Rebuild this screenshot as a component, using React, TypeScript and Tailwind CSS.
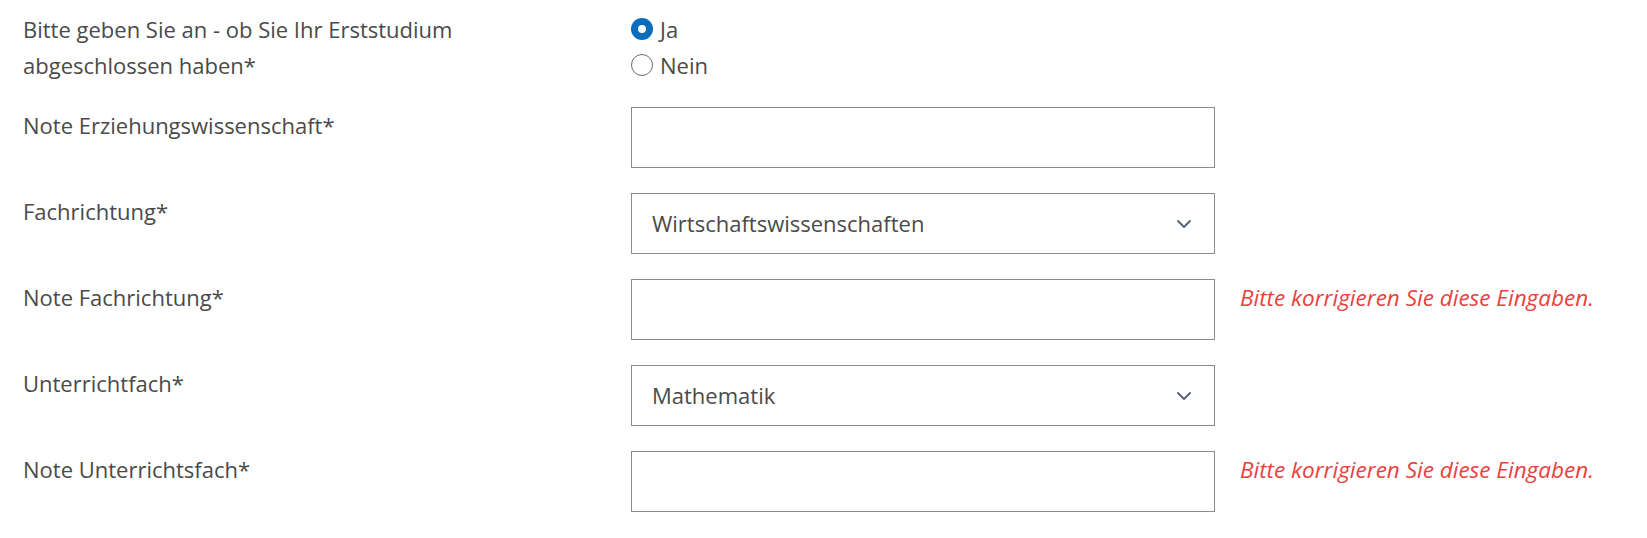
import { ChevronDown } from 'lucide-react'

const font = { fontFamily: '"Open Sans", "Noto Sans", sans-serif' }

function Row({ label, error, lh = 'leading-[37px]', children }: { label: React.ReactNode; error?: boolean; lh?: string; children: React.ReactNode }) {
  return (
    <div className="flex items-start">
      <div className={`w-[608px] shrink-0 text-[22px] ${lh} text-[#4a4a4a]`}>{label}</div>
      <div className="w-[584px] shrink-0">{children}</div>
      {error && (
        <p className="ml-[25px] text-[22.5px] leading-[37px] italic text-[#e8413e]">Bitte korrigieren Sie diese Eingaben.</p>
      )}
    </div>
  )
}

function TextBox() {
  return <input className="block w-full h-[61px] border border-[#8c8c8c] bg-white px-5 text-[22px] outline-none" />
}

function SelectBox({ value }: { value: string }) {
  return (
    <div className="flex items-center justify-between h-[61px] border border-[#8c8c8c] bg-white pl-5 pr-[18px]">
      <span className="text-[22px] text-[#4a4a4a]">{value}</span>
      <ChevronDown className="w-[24px] h-[24px] text-[#5b6574]" strokeWidth={2} />
    </div>
  )
}

function Radio({ label, checked }: { label: string; checked?: boolean }) {
  return (
    <label className="flex items-center gap-[7px] h-[36px] text-[22px] text-[#4a4a4a]">
      {checked ? (
        <span className="w-[22px] h-[22px] rounded-full bg-[#0a6ebd] flex items-center justify-center">
          <span className="w-[8px] h-[8px] rounded-full bg-white" />
        </span>
      ) : (
        <span className="w-[22px] h-[22px] rounded-full border border-[#6b6b6b] bg-white" />
      )}
      {label}
    </label>
  )
}

export default function App() {
  return (
    <div className="min-h-screen bg-white pl-[23px] pt-[11px]" style={font}>
      <div className="flex flex-col gap-[25px]">
        <div className="-mb-[1px]">
          <Row
            lh="leading-[36px]"
            label={
              <>
                Bitte geben Sie an - ob Sie Ihr Erststudium
                <br />
                abgeschlossen haben*
              </>
            }
          >
            <div className="flex flex-col">
              <Radio label="Ja" checked />
              <Radio label="Nein" />
            </div>
          </Row>
        </div>
        <Row label="Note Erziehungswissenschaft*">
          <TextBox />
        </Row>
        <Row label="Fachrichtung*">
          <SelectBox value="Wirtschaftswissenschaften" />
        </Row>
        <Row label="Note Fachrichtung*" error>
          <TextBox />
        </Row>
        <Row label="Unterrichtfach*">
          <SelectBox value="Mathematik" />
        </Row>
        <Row label="Note Unterrichtsfach*" error>
          <TextBox />
        </Row>
      </div>
    </div>
  )
}
